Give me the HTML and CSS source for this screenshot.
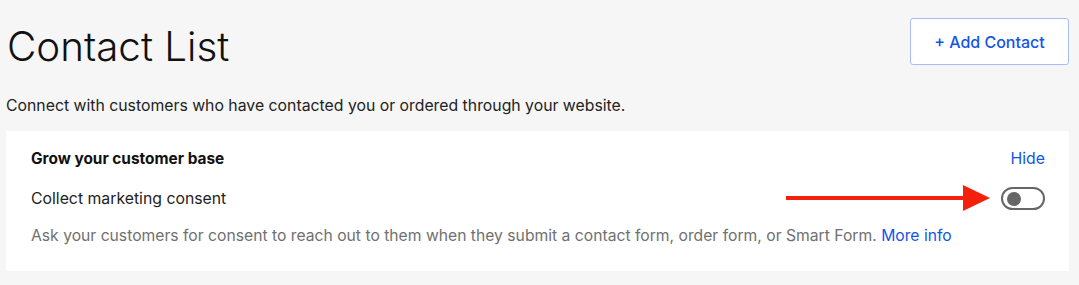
FILE: index.html
```html
<!DOCTYPE html>
<html lang="en">
<head>
    <meta charset="UTF-8">
    <meta name="viewport" content="width=device-width, initial-scale=1.0">
    <title>Contact List</title>
    <link rel="stylesheet" href="styles.css">
</head>
<body>
    <div class="page">
        <header class="pageHeader">
            <h1 class="pageTitle">Contact List</h1>
            <button class="addButton">+ Add Contact</button>
        </header>
        <p class="intro">Connect with customers who have contacted you or ordered through your website.</p>

        <section class="card">
            <div class="cardRow">
                <h2 class="cardTitle">Grow your customer base</h2>
                <a href="#" class="link">Hide</a>
            </div>
            <div class="cardRow consentRow">
                <span class="consentLabel">Collect marketing consent</span>
                <span class="callout" aria-hidden="true">
                    <svg width="204" height="26" viewBox="0 0 204 26">
                        <rect x="0" y="11" width="180" height="4" fill="#f3200c"/>
                        <polygon points="177,0 204,13 177,26" fill="#f3200c"/>
                    </svg>
                </span>
                <button class="toggle" aria-pressed="false"><span class="knob"></span></button>
            </div>
            <p class="hint">Ask your customers for consent to reach out to them when they submit a contact form, order form, or Smart Form. <a href="#" class="link">More info</a></p>
        </section>
    </div>
</body>
</html>
```

FILE: styles.css
```css
html {
    font-family: 'Inter', 'Noto Sans', sans-serif;
}

body {
    margin: 0;
    background: #f6f6f6;
    color: #1a1a1a;
}

.page {
    padding: 18px 10px 0 6px;
}

.pageHeader {
    display: flex;
    justify-content: space-between;
    align-items: flex-start;
}

.pageTitle {
    margin: 5px 0 0 1px;
    font-size: 40.3px;
    font-weight: 300;
    color: #111;
    line-height: 48px;
}

.addButton {
    width: 159px;
    height: 47px;
    background: #fff;
    border: 1px solid #a9bcfa;
    border-radius: 3px;
    color: #1454e6;
    font-family: inherit;
    font-size: 16px;
    font-weight: 500;
    cursor: pointer;
}

.intro {
    margin: 25px 0 15px;
    font-size: 15.8px;
    line-height: 20px;
    color: #222;
}

.card {
    background: #fff;
    padding: 18px 24px 25px 25px;
}

.cardRow {
    display: flex;
    justify-content: space-between;
    align-items: center;
}

.cardTitle {
    margin: 0;
    font-size: 15.4px;
    font-weight: 700;
    line-height: 20px;
    color: #111;
}

.link {
    color: #1454e6;
    text-decoration: none;
}

.cardRow .link {
    font-size: 15.8px;
    line-height: 20px;
}

.consentRow {
    position: relative;
    margin-top: 18px;
}

.consentLabel {
    font-size: 15.8px;
    line-height: 22px;
    color: #222;
}

.callout {
    position: absolute;
    right: 55px;
    top: -2px;
    line-height: 0;
}

.toggle {
    position: relative;
    width: 44px;
    height: 23px;
    padding: 0;
    background: #fff;
    border: 2px solid #666;
    border-radius: 12px;
    cursor: pointer;
}

.knob {
    position: absolute;
    left: 4px;
    top: 2.5px;
    width: 14px;
    height: 14px;
    border-radius: 50%;
    background: #666;
}

.hint {
    margin: 16px 0 0;
    font-size: 15.7px;
    line-height: 20px;
    color: #707070;
}
```
